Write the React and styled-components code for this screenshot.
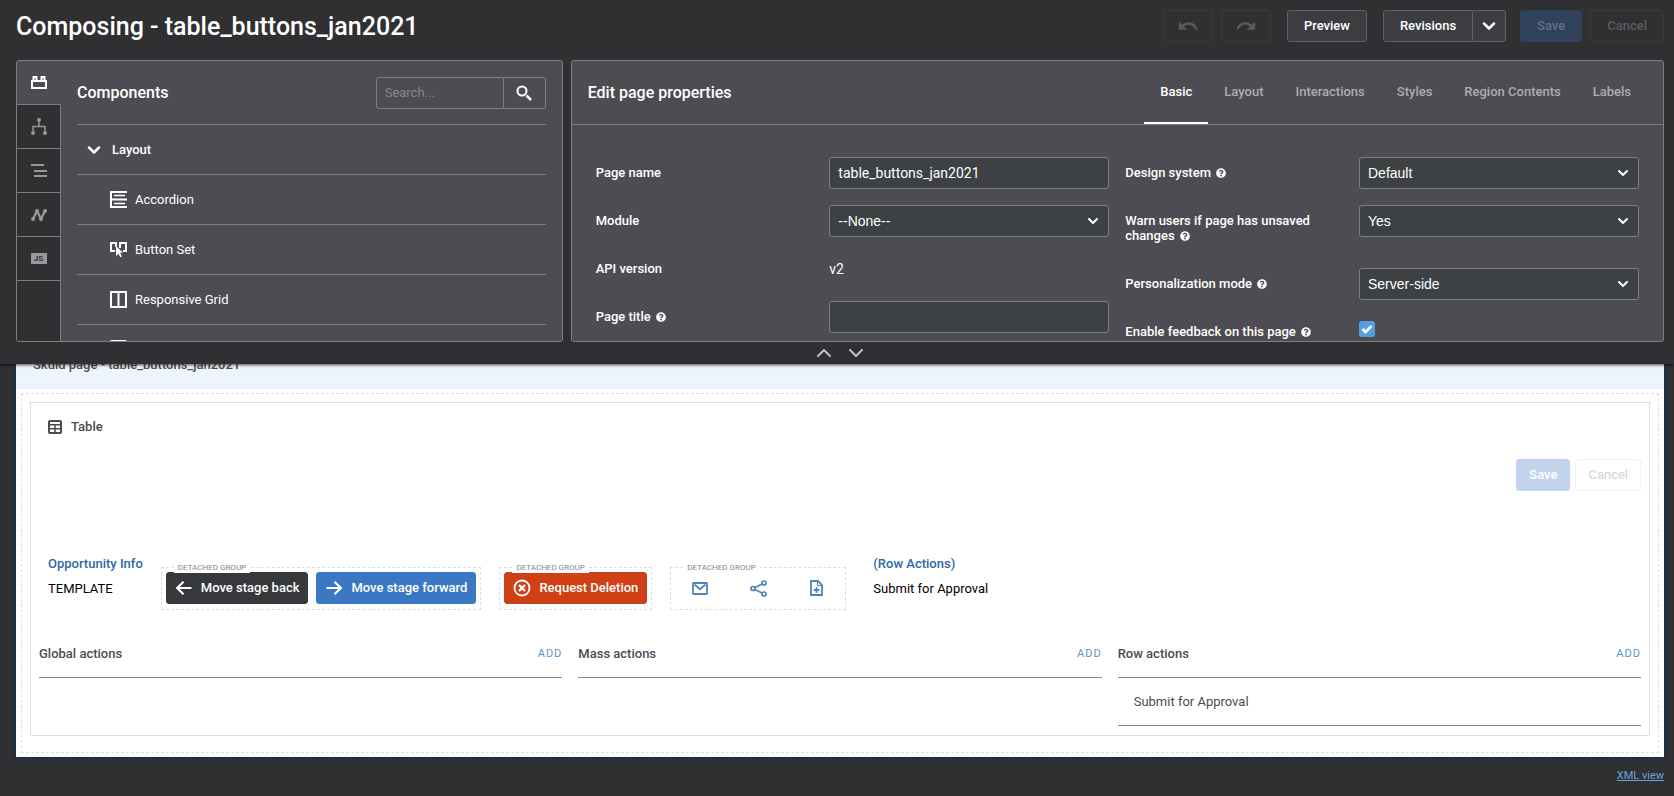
import React from 'react';
import styled, { createGlobalStyle, css } from 'styled-components';
import { MdUndo, MdRedo } from 'react-icons/md';
import { FaQuestionCircle } from 'react-icons/fa';
import { ChevronDown, ChevronUp } from 'lucide-react';

const ui = "Roboto, 'Liberation Sans', sans-serif";
const line = '#7e7f83';

const GlobalStyle = createGlobalStyle`
  *, *::before, *::after { box-sizing: border-box; }
  body {
    margin: 0;
    background: #303033;
    color: #fff;
    font: 400 13px/16px ${ui};
  }
  button, input, select { font: inherit; color: inherit; margin: 0; }
  button { cursor: pointer; padding: 0; border: 0; background: none; }
  h1, h2, h3, p, ul { margin: 0; padding: 0; }
  ul { list-style: none; }
`;

const Workspace = styled.header`
  position: relative;
  z-index: 1;
  background: #303033;
  padding: 0 10px 0 16px;
  box-shadow: 0 1px 3px rgba(0, 0, 0, 0.7);
`;

const TitleBar = styled.div`
  display: flex;
  align-items: center;
  justify-content: space-between;
  height: 60px;
  padding-bottom: 8px;
`;

const Title = styled.h1`
  padding-top: 2px;
  font-size: 25px;
  line-height: 32px;
  font-weight: 500;
`;

const Toolbar = styled.div`
  display: flex;
  gap: 8px;
`;

const ButtonGroup = styled.div`
  display: flex;
  margin: 0 ${(p) => (p.$spaced ? 6 : 0)}px 0 8px;
`;

const tones = {
  plain: css`background: #3c3d41; border-color: #606166; color: #fff;`,
  ghost: css`background: transparent; border-color: #3a3a3d; color: #5a5b5f;`,
  saveDim: css`background: #30415c; border-color: #30415c; color: #66707f;`,
  saveLight: css`background: #c2d3ee; border-color: #c2d3ee; color: #fff;`,
  ghostLight: css`background: #fff; border-color: #f1f2f4; color: #cfd1d6;`,
  dark: css`background: #37383c; border-color: #37383c; color: #fff;`,
  blue: css`background: #3a78c3; border-color: #3a78c3; color: #fff;`,
  red: css`background: #d14014; border-color: #b5482a; color: #fff;`,
};

const Button = styled.button`
  display: flex;
  align-items: center;
  justify-content: center;
  gap: 8px;
  height: 32px;
  padding: 0 ${(p) => p.$pad || 16}px;
  border: 1px solid;
  border-radius: 3px;
  white-space: nowrap;
  font-weight: ${(p) => (p.$light ? 400 : 500)};
  ${(p) => tones[p.$tone]}
  &:first-child:not(:last-child) { ${(p) => p.$joined && 'border-radius: 3px 0 0 3px;'} }
  &:last-child:not(:first-child) { ${(p) => p.$joined && 'border-radius: 0 3px 3px 0; border-left: 0;'} }
`;

const Panels = styled.div`
  display: grid;
  grid-template-columns: minmax(0, 1fr) minmax(0, 2fr);
  gap: 8px;
  height: 282px;
`;

const Panel = styled.section`
  display: flex;
  background: #4d4c52;
  border: 1px solid ${line};
  border-radius: 3px;
  overflow: hidden;
  flex-direction: ${(p) => (p.$column ? 'column' : 'row')};
`;

const SideTabs = styled.nav`
  display: flex;
  flex-direction: column;
  width: 44px;
  flex: none;
`;

const SideTab = styled.button`
  display: flex;
  align-items: center;
  justify-content: center;
  height: 44px;
  color: ${(p) => (p.$active ? '#fff' : '#97989b')};
  background: ${(p) => (p.$active ? 'transparent' : '#303033')};
  border-bottom: 1px solid ${line};
  border-right: 1px solid ${(p) => (p.$active ? 'transparent' : line)};
`;

const SideFill = styled.div`
  flex: 1;
  background: #303033;
  border-right: 1px solid ${line};
`;

const Library = styled.div`
  flex: 1;
  min-width: 0;
  padding: 0 16px;
`;

const LibraryHead = styled.div`
  display: flex;
  align-items: center;
  justify-content: space-between;
  height: 64px;
  border-bottom: 1px solid ${line};
`;

const Heading = styled.h2`
  font-size: 16px;
  line-height: 20px;
  font-weight: 500;
`;

const Search = styled.form`
  display: flex;
`;

const SearchInput = styled.input`
  width: 128px;
  height: 32px;
  padding: 0 8px;
  background: transparent;
  border: 1px solid ${line};
  border-radius: 3px 0 0 3px;
  &::placeholder { color: #85868a; opacity: 1; }
`;

const SearchButton = styled.button`
  display: flex;
  align-items: center;
  justify-content: center;
  width: 42px;
  height: 32px;
  border: 1px solid ${line};
  border-left: 0;
  border-radius: 0 3px 3px 0;
`;

const Category = styled.button`
  display: flex;
  align-items: center;
  gap: 8px;
  width: 100%;
  height: 50px;
  padding-left: 7px;
  border-bottom: 1px solid ${line};
  font-weight: 500;
`;

const Item = styled.li`
  display: flex;
  align-items: center;
  gap: 8px;
  height: 50px;
  padding-left: 33px;
  border-bottom: 1px solid ${line};
  svg { flex: none; }
`;

const PropsHead = styled.div`
  display: flex;
  justify-content: space-between;
  align-items: center;
  flex: none;
  height: 64px;
  padding: 0 16px;
  border-bottom: 1px solid ${line};
`;

const Tabs = styled.div`
  display: flex;
  align-self: stretch;
`;

const Tab = styled.button`
  padding: 0 16px;
  font-weight: 500;
  white-space: nowrap;
  color: ${(p) => (p.$active ? '#fff' : '#abacaf')};
  border-bottom: 2px solid ${(p) => (p.$active ? '#fff' : 'transparent')};
`;

const Form = styled.form`
  display: grid;
  grid-template-columns: minmax(0, 1fr) minmax(0, 1fr);
  gap: 16px;
  padding: 32px 24px 0;
`;

const FormColumn = styled.div`
  display: flex;
  flex-direction: column;
  gap: 16px;
`;

const Field = styled.div`
  display: grid;
  grid-template-columns: minmax(0, 1fr) 280px;
  align-items: start;
`;

const FieldLabel = styled.label`
  padding: 8px 40px 9px 0;
  line-height: 15px;
  font-weight: 500;
`;

const HelpIcon = styled(FaQuestionCircle)`
  width: 10px;
  height: 10px;
  margin-left: 2px;
  vertical-align: -1px;
`;

const controlBox = css`
  width: 100%;
  height: 32px;
  padding: 0 8px;
  background: #3d4144;
  border: 1px solid ${line};
  border-radius: 3px;
  font-size: 14px;
`;

const TextInput = styled.input`
  ${controlBox}
`;

const SelectWrap = styled.div`
  display: grid;
  align-items: center;
  > * { grid-area: 1 / 1; }
  > svg { justify-self: end; margin-right: 8px; pointer-events: none; }
`;

const SelectBox = styled.select`
  ${controlBox}
  appearance: none;
  font-family: 'Liberation Sans', Arial, sans-serif;
`;

const FieldValue = styled.span`
  font-size: 14px;
  line-height: 32px;
`;

const CheckWrap = styled.span`
  display: grid;
  place-items: center;
  width: 16px;
  height: 16px;
  margin-top: 5px;
  > * { grid-area: 1 / 1; }
  > svg { pointer-events: none; z-index: 1; }
`;

const CheckInput = styled.input`
  appearance: none;
  width: 16px;
  height: 16px;
  border-radius: 3px;
  &:checked { background: #559fe0; }
`;

const Splitter = styled.div`
  display: flex;
  justify-content: center;
  align-items: center;
  gap: 8px;
  height: 22px;
  color: #c3c3c5;
  button { display: flex; }
`;

const Canvas = styled.main`
  margin: -23px 10px 0 16px;
  background: #fff;
  color: #4b4c52;
  box-shadow: 0 0 0 2px #1c3149;
`;

const CanvasHead = styled.div`
  height: 48px;
  padding-left: 17px;
  background: #edf4fb;
  line-height: 48px;
  font-weight: 500;
`;

const CanvasBody = styled.div`
  padding: 4px 5px;
`;

const DropZone = styled.div`
  padding: 8px 8px 16px;
  border: 1px dashed #dedfe3;
`;

const TableCard = styled.section`
  border: 1px solid #dbdfe4;
  padding: 8px 8px 9px;
`;

const CardTitle = styled.div`
  display: flex;
  align-items: center;
  gap: 9px;
  height: 32px;
  padding-left: 9px;
  font-weight: 500;
`;

const CardActions = styled.div`
  display: flex;
  justify-content: flex-end;
  gap: 5px;
  margin-top: 16px;
`;

const RowPreview = styled.div`
  display: flex;
  align-items: flex-start;
  gap: 18px;
  margin-top: 65px;
  padding-left: 9px;
`;

const Column = styled.div`
  color: #000;
  padding-left: ${(p) => p.$inset || 0}px;
`;

const ColumnTitle = styled.h3`
  margin-bottom: 9px;
  font-size: 13px;
  line-height: 16px;
  font-weight: 500;
  color: #2e69a6;
`;

const Group = styled.div`
  position: relative;
  display: flex;
  gap: 8px;
  margin-top: 11px;
  padding: 4px 4px 5px;
  border: 1px dashed #dedfe3;
`;

const GroupLabel = styled.span`
  position: absolute;
  top: -6px;
  left: 12px;
  padding: 0 4px;
  background: #fff;
  color: #85868b;
  font-size: 8px;
  line-height: 11px;
`;

const IconButton = styled.button`
  display: flex;
  align-items: center;
  justify-content: center;
  width: 50px;
  height: 32px;
  color: #4f84b8;
`;

const ActionLists = styled.div`
  display: grid;
  grid-template-columns: repeat(3, minmax(0, 1fr));
  gap: 16px;
  margin-top: 20px;
`;

const ListHead = styled.div`
  display: flex;
  justify-content: space-between;
  align-items: center;
  height: 48px;
  border-bottom: 1px solid #85868a;
  h3 { font-size: 13px; line-height: 16px; font-weight: 500; }
`;

const AddButton = styled.button`
  font-size: 11px;
  letter-spacing: 1px;
  color: #5b94c8;
`;

const ListItem = styled.li`
  height: 48px;
  padding-left: 16px;
  line-height: 47px;
  border-bottom: 1px solid #85868a;
`;

const Footer = styled.footer`
  display: flex;
  justify-content: flex-end;
  padding: 11px 10px;
`;

const FooterLink = styled.a`
  font-size: 11px;
  color: #63a4dc;
`;

function BrickIcon() {
  return (
    <svg width="16" height="13" viewBox="0 0 16 13" fill="none" stroke="currentColor" strokeWidth="2">
      <path d="M1 5h14v7H1z" />
      <path d="M2.5 4V1h3v3M10.500 4V1h3v3" />
    </svg>
  );
}

function ModelsIcon() {
  return (
    <svg width="16" height="17" viewBox="0 0 16 17" fill="currentColor">
      <circle cx="8" cy="2" r="2" />
      <circle cx="2" cy="15" r="2" />
      <circle cx="14" cy="15" r="2" />
      <path d="M2 13V8.500h12V13M8 2v6.500" fill="none" stroke="currentColor" strokeWidth="1.500" />
    </svg>
  );
}

function OutlineIcon() {
  return (
    <svg width="16" height="14" viewBox="0 0 16 14" stroke="currentColor" strokeWidth="2">
      <path d="M0 1h13M3 7h13M3 12h13" />
    </svg>
  );
}

function FlowIcon() {
  return (
    <svg width="16" height="12" viewBox="0 0 16 12" fill="currentColor">
      <path d="M2 10l4-8 4 8 4-8" fill="none" stroke="currentColor" strokeWidth="2.300" />
      <circle cx="2" cy="10" r="2" />
      <circle cx="6" cy="2" r="2" />
      <circle cx="10" cy="10" r="2" />
      <circle cx="14" cy="2" r="2" />
    </svg>
  );
}

const ScriptBadge = styled.span`
  width: 16px;
  height: 11px;
  background: #97989b;
  color: #303033;
  font-size: 8px;
  line-height: 11px;
  font-weight: 700;
`;

function SearchIcon() {
  return (
    <svg width="16" height="16" viewBox="0 0 16 16" fill="none" stroke="currentColor" strokeWidth="2">
      <circle cx="6" cy="6" r="4.500" />
      <path d="M10.500 10.500L15 15" strokeWidth="2.500" />
    </svg>
  );
}

function AccordionIcon() {
  return (
    <svg width="17" height="17" viewBox="0 0 17 17" fill="none" stroke="currentColor">
      <path d="M17 1H1v15h16" strokeWidth="2" />
      <path d="M1 8.500h16" strokeWidth="2" />
      <path d="M4 4.500h11M4 12.500h11" strokeWidth="1.300" />
    </svg>
  );
}

function ButtonSetIcon() {
  return (
    <svg width="17" height="17" viewBox="0 0 17 17" fill="none" stroke="currentColor" strokeWidth="2">
      <path d="M5 10H1V2h5v4M10 7V2h6v8h-3" />
      <path d="M6 5l7 6.500-2.800.3 1.700 3.700-1.700.8-1.600-3.500L6 15z" fill="currentColor" stroke="none" />
    </svg>
  );
}

function GridIcon() {
  return (
    <svg width="17" height="17" viewBox="0 0 17 17" fill="none" stroke="currentColor" strokeWidth="2">
      <path d="M1 1h15v15H1zM8.500 1v15" />
    </svg>
  );
}

function WrapperIcon() {
  return (
    <svg width="17" height="19" viewBox="0 0 17 19" fill="none" stroke="currentColor" strokeWidth="2">
      <rect x="1" y="1" width="15" height="17" rx="1" />
    </svg>
  );
}

function TableIcon() {
  return (
    <svg width="14" height="14" viewBox="0 0 14 14" fill="none" stroke="currentColor" strokeWidth="1.500">
      <rect x="1" y="1" width="12" height="12" rx="1" strokeWidth="2" />
      <path d="M1 4.700h12M1 8.800h12M7 4.700V13" />
    </svg>
  );
}

function ArrowIcon({ forward }) {
  return (
    <svg width="18" height="18" viewBox="0 0 18 18" fill="none" stroke="currentColor" strokeWidth="2.200">
      <path d={forward ? 'M1.500 9h14M9.500 2.700L15.800 9l-6.300 6.300' : 'M16.500 9h-14M8.500 2.700L2.200 9l6.300 6.300'} />
    </svg>
  );
}

function CrossCircleIcon() {
  return (
    <svg width="18" height="18" viewBox="0 0 18 18" fill="none" stroke="currentColor">
      <circle cx="9" cy="9" r="7.500" strokeWidth="1.800" />
      <path d="M6 6l6 6M12 6l-6 6" strokeWidth="2.400" />
    </svg>
  );
}

function MailIcon() {
  return (
    <svg width="16" height="13" viewBox="0 0 16 13" fill="none" stroke="currentColor" strokeWidth="1.800">
      <rect x="1" y="1" width="14" height="11" rx="0.500" />
      <path d="M2.500 2.500L8 7.200l5.500-4.700" />
    </svg>
  );
}

function ShareIcon() {
  return (
    <svg width="17" height="17" viewBox="0 0 17 17" fill="none" stroke="currentColor" strokeWidth="1.700">
      <circle cx="3" cy="8.500" r="2" />
      <circle cx="14" cy="3" r="2" />
      <circle cx="14" cy="14" r="2" />
      <path d="M5 7.500l7-3.500M5 9.500l7 3.500" />
    </svg>
  );
}

function NoteIcon() {
  return (
    <svg width="13" height="16" viewBox="0 0 13 16" fill="none" stroke="currentColor" strokeWidth="1.800">
      <path d="M1 1h7l4 4v10H1z" />
      <path d="M7.500 1v4.500H12" strokeWidth="1" />
      <path d="M6.500 7.200v5.600M3.700 10h5.600" />
    </svg>
  );
}

function CheckIcon() {
  return (
    <svg width="12" height="12" viewBox="0 0 12 12" fill="none" stroke="currentColor" strokeWidth="2.800">
      <path d="M1.500 6l3 3 6-6" />
    </svg>
  );
}

function SelectField({ id, label, help, value }) {
  return (
    <Field>
      <FieldLabel htmlFor={id}>{label} {help && <HelpIcon />}</FieldLabel>
      <SelectWrap>
        <SelectBox id={id} defaultValue={value}>
          <option>{value}</option>
        </SelectBox>
        <ChevronDown size={16} strokeWidth={3} />
      </SelectWrap>
    </Field>
  );
}

const sideTabs = [
  ['Components', <BrickIcon />],
  ['Models', <ModelsIcon />],
  ['Outline', <OutlineIcon />],
  ['Action flows', <FlowIcon />],
  ['Scripts', <ScriptBadge>JS</ScriptBadge>],
];

const components = [
  ['Accordion', <AccordionIcon />],
  ['Button Set', <ButtonSetIcon />],
  ['Responsive Grid', <GridIcon />],
];

const propertyTabs = ['Basic', 'Layout', 'Interactions', 'Styles', 'Region Contents', 'Labels'];

const actionLists = [
  ['Global actions', []],
  ['Mass actions', []],
  ['Row actions', ['Submit for Approval']],
];

export default function App() {
  return (
    <>
      <GlobalStyle />
      <Workspace>
        <TitleBar>
          <Title>Composing - table_buttons_jan2021</Title>
          <Toolbar>
            <Button $tone="ghost" $pad={13} aria-label="Undo"><MdUndo size={22} /></Button>
            <Button $tone="ghost" $pad={13} aria-label="Redo"><MdRedo size={22} /></Button>
            <ButtonGroup>
              <Button $tone="plain">Preview</Button>
            </ButtonGroup>
            <ButtonGroup $spaced>
              <Button $tone="plain" $joined>Revisions</Button>
              <Button $tone="plain" $joined $pad={6} aria-label="More revisions">
                <ChevronDown size={20} strokeWidth={3} />
              </Button>
            </ButtonGroup>
            <Button $tone="saveDim">Save</Button>
            <Button $tone="ghost">Cancel</Button>
          </Toolbar>
        </TitleBar>

        <Panels>
          <Panel>
            <SideTabs>
              {sideTabs.map(([name, icon], i) => (
                <SideTab key={name} aria-label={name} $active={i === 0}>{icon}</SideTab>
              ))}
              <SideFill />
            </SideTabs>
            <Library>
              <LibraryHead>
                <Heading>Components</Heading>
                <Search onSubmit={(e) => e.preventDefault()}>
                  <SearchInput aria-label="Search components" placeholder="Search..." />
                  <SearchButton aria-label="Search"><SearchIcon /></SearchButton>
                </Search>
              </LibraryHead>
              <Category><ChevronDown size={20} strokeWidth={3} />Layout</Category>
              <ul>
                {components.map(([name, icon]) => (
                  <Item key={name}>{icon}{name}</Item>
                ))}
                <Item aria-label="Wrapper"><WrapperIcon /></Item>
              </ul>
            </Library>
          </Panel>

          <Panel $column>
            <PropsHead>
              <Heading>Edit page properties</Heading>
              <Tabs role="tablist">
                {propertyTabs.map((name, i) => (
                  <Tab key={name} role="tab" aria-selected={i === 0} $active={i === 0}>{name}</Tab>
                ))}
              </Tabs>
            </PropsHead>
            <Form>
              <FormColumn>
                <Field>
                  <FieldLabel htmlFor="page-name">Page name</FieldLabel>
                  <TextInput id="page-name" defaultValue="table_buttons_jan2021" />
                </Field>
                <SelectField id="module" label="Module" value="--None--" />
                <Field>
                  <FieldLabel as="span">API version</FieldLabel>
                  <FieldValue>v2</FieldValue>
                </Field>
                <Field>
                  <FieldLabel htmlFor="page-title">Page title <HelpIcon /></FieldLabel>
                  <TextInput id="page-title" />
                </Field>
              </FormColumn>
              <FormColumn>
                <SelectField id="design" label="Design system" help value="Default" />
                <SelectField id="warn" label="Warn users if page has unsaved changes" help value="Yes" />
                <SelectField id="mode" label="Personalization mode" help value="Server-side" />
                <Field>
                  <FieldLabel htmlFor="feedback">Enable feedback on this page <HelpIcon /></FieldLabel>
                  <CheckWrap>
                    <CheckInput type="checkbox" id="feedback" defaultChecked />
                    <CheckIcon />
                  </CheckWrap>
                </Field>
              </FormColumn>
            </Form>
          </Panel>
        </Panels>

        <Splitter>
          <button aria-label="Collapse"><ChevronUp size={24} strokeWidth={2} /></button>
          <button aria-label="Expand"><ChevronDown size={24} strokeWidth={2} /></button>
        </Splitter>
      </Workspace>

      <Canvas>
        <CanvasHead>Skuid page - table_buttons_jan2021</CanvasHead>
        <CanvasBody>
          <DropZone>
            <TableCard>
              <CardTitle><TableIcon />Table</CardTitle>
              <CardActions>
                <Button $tone="saveLight" $pad={12}>Save</Button>
                <Button $tone="ghostLight" $pad={12} $light>Cancel</Button>
              </CardActions>
              <RowPreview>
                <Column>
                  <ColumnTitle>Opportunity Info</ColumnTitle>
                  <p>TEMPLATE</p>
                </Column>
                <Group>
                  <Button $tone="dark" $pad={8}><ArrowIcon />Move stage back</Button>
                  <Button $tone="blue" $pad={8}><ArrowIcon forward />Move stage forward</Button>
                  <GroupLabel>DETACHED GROUP</GroupLabel>
                </Group>
                <Group>
                  <Button $tone="red" $pad={8}><CrossCircleIcon />Request Deletion</Button>
                  <GroupLabel>DETACHED GROUP</GroupLabel>
                </Group>
                <Group>
                  <IconButton aria-label="Email"><MailIcon /></IconButton>
                  <IconButton aria-label="Share"><ShareIcon /></IconButton>
                  <IconButton aria-label="Add note"><NoteIcon /></IconButton>
                  <GroupLabel>DETACHED GROUP</GroupLabel>
                </Group>
                <Column $inset={9}>
                  <ColumnTitle>(Row Actions)</ColumnTitle>
                  <p>Submit for Approval</p>
                </Column>
              </RowPreview>
              <ActionLists>
                {actionLists.map(([name, items]) => (
                  <div key={name}>
                    <ListHead><h3>{name}</h3><AddButton>ADD</AddButton></ListHead>
                    <ul>{items.map((item) => <ListItem key={item}>{item}</ListItem>)}</ul>
                  </div>
                ))}
              </ActionLists>
            </TableCard>
          </DropZone>
        </CanvasBody>
      </Canvas>

      <Footer><FooterLink href="#xml">XML view</FooterLink></Footer>
    </>
  );
}
